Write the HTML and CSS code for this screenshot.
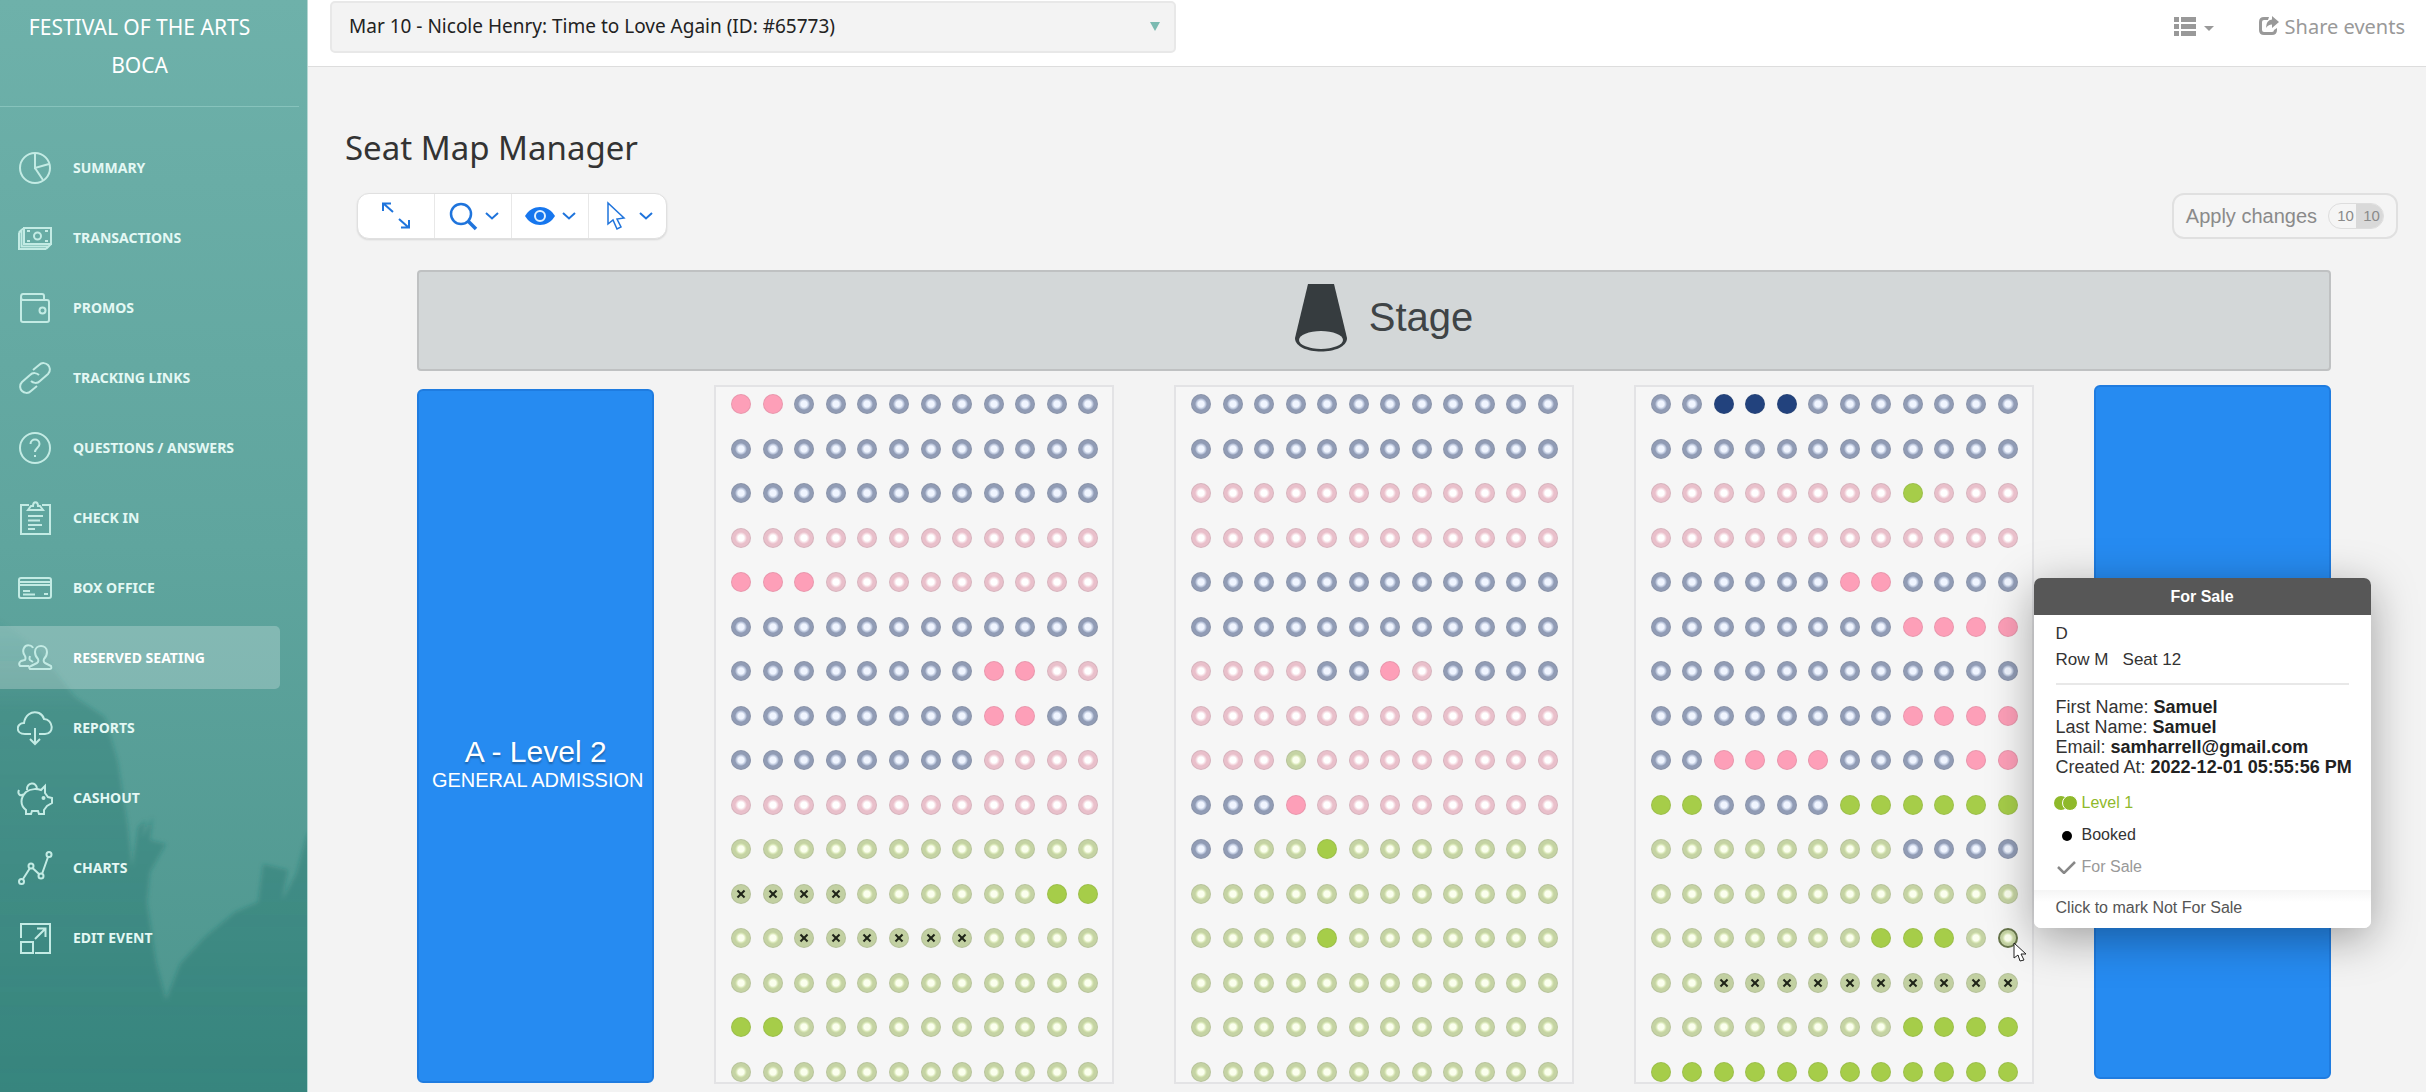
FILE: index.html
```html
<!DOCTYPE html>
<html lang="en">
<head>
<meta charset="utf-8">
<meta name="viewport" content="width=device-width, initial-scale=1">
<title>Seat Map Manager</title>
<link rel="stylesheet" href="styles.css">
</head>
<body>
<div class="app">
  <aside class="sidebar">
    <svg class="backdrop" viewBox="0 0 307 480" preserveAspectRatio="none" aria-hidden="true">
      <defs>
        <linearGradient id="crowd" x1="0" y1="0" x2="0" y2="1">
          <stop offset="0" stop-color="#1f6f68" stop-opacity="0"/>
          <stop offset=".2" stop-color="#1f6f68" stop-opacity=".3"/>
          <stop offset="1" stop-color="#1f6f68" stop-opacity=".42"/>
        </linearGradient>
        <filter id="soft"><feGaussianBlur stdDeviation="2"/></filter>
      </defs>
      <path filter="url(#soft)" fill="url(#crowd)" d="M-10 0 40 40 75 85 105 105 118 150 128 215 132 255 138 215 146 208 142 226 153 205 150 228 166 232 150 260 147 290 156 350 166 388 180 352 205 325 235 300 258 290 263 252 288 258 282 288 296 262 307 222 320 215V490H-10Z"/>
    </svg>
    <h2 class="org">FESTIVAL OF THE ARTS BOCA</h2>
    <nav class="menu">
      <a href="#summary"><svg viewBox="0 0 36 36"><circle cx="18" cy="18" r="15"/><path d="M18 3v15l14-4M18 18l8 12"/></svg>SUMMARY</a>
      <a href="#transactions"><svg viewBox="0 0 36 36"><path d="M7 8h27v16H7zM4.500 10v16.500H32M2 12.500V29h27M4.500 10 7 8M2 12.500l2.500-2.500M29 29l5-5M10 11h3M28 11h3M10 21h3M28 21h3"/><circle cx="20.500" cy="16" r="3.500"/></svg>TRANSACTIONS</a>
      <a href="#promos"><svg viewBox="0 0 36 36"><path d="M4 7v23q0 2 2 2h24q2 0 2-2V12q0-2-2-2H6q-2 0-2-3 0-3 2-3h19q2 0 2 2v4"/><circle cx="25.500" cy="20.500" r="3"/></svg>PROMOS</a>
      <a href="#tracking"><svg viewBox="0 0 36 36"><path d="m16 10 6-5c3-3 7-2 9 0s3 6 0 9l-8 7c-3 3-7 2-9 0M20 26l-6 5c-3 3-7 2-9 0s-3-6 0-9l8-7c3-3 7-2 9 0"/></svg>TRACKING LINKS</a>
      <a href="#questions"><svg viewBox="0 0 36 36"><circle cx="18" cy="18" r="15"/><path d="M13.500 14c0-6 9-6 9 0 0 4-4.500 4-4.500 8M18 25v2"/></svg>QUESTIONS / ANSWERS</a>
      <a href="#checkin"><svg viewBox="0 0 36 36"><path d="M12 5H4v29h29V5h-8M11 10h15l-3-4h-2c0-5-5-5-5 0h-2zM11 16h15M11 20.500h12M11 25h14M11 29h7"/></svg>CHECK IN</a>
      <a href="#boxoffice"><svg viewBox="0 0 36 36"><path d="M4 8h28q2 0 2 2v16q0 2-2 2H4q-2 0-2-2V10q0-2 2-2zM2 12h32M2 15h32M6 21h7M6 24.500h12M27 24h4"/></svg>BOX OFFICE</a>
      <a class="active" href="#seating" aria-current="page"><svg viewBox="0 0 36 36"><path d="M13 29h20q2 0 1-3l-6-3q-2-1-1-4 3-3 3-7c0-8-12-8-12 0q0 4 3 7 1 3-1 4l-6 3q-3 1-1 3zM12 26H3q-2-3 1-5l4-1q1-2 0-4-3-4-1-8c2-4 8-3 9 0M13 16q-1 3 0 4l3 2"/></svg>RESERVED SEATING</a>
      <a href="#reports"><svg viewBox="0 0 36 36"><path d="M14 24H8C-2 24-1 13 7 13 8 6 14 0 22 3q4 2 5 6c9 0 11 15 1 15h-6M18 18v16M13 29l5 5 5-5"/></svg>REPORTS</a>
      <a href="#cashout"><svg viewBox="0 0 36 36"><path d="M2 10c-2 4 2 7 4 4M9 12c5-4 12-3 15-2l4-4v7l3 4 4 1v5l-5 3-3 4v4h-5l-1-3h-6l-1 3H9v-4c-6-5-6-12 0-18z"/><path d="M10 10c-1-8 10-9 10-1"/><circle cx="26.500" cy="18" r="1"/></svg>CASHOUT</a>
      <a href="#charts"><svg viewBox="0 0 36 36"><path d="m6 29 7-11M15.500 18l7 6.500M25 24l6-17"/><circle cx="4.500" cy="31.500" r="2.500"/><circle cx="14" cy="16" r="2.500"/><circle cx="24" cy="26" r="2.500"/><circle cx="32" cy="4.500" r="2.500"/></svg>CHARTS</a>
      <a href="#edit"><svg viewBox="0 0 36 36"><path d="M4 18V4h29v29H18M4 22h12v11H4zM18 19 28 9M20 8.500h8.500V17"/></svg>EDIT EVENT</a>
    </nav>
  </aside>

  <div class="page">
    <header class="topbar">
      <label class="picker">
        <select aria-label="Event">
          <option>Mar 10 - Nicole Henry: Time to Love Again (ID: #65773)</option>
        </select>
      </label>
      <div class="actions">
        <button class="plain" type="button" aria-label="View options">
          <svg width="22" height="19" viewBox="0 0 22 19"><path d="M0 0h5v5H0zM7 0h15v5H7zM0 7h5v5H0zM7 7h15v5H7zM0 14h5v5H0zM7 14h15v5H7z"/></svg>
          <svg class="tick" width="10" height="5" viewBox="0 0 10 5"><path d="M0 0h10L5 5z"/></svg>
        </button>
        <a class="plain" href="#share">
          <svg width="20" height="20" viewBox="0 0 20 20"><path d="M10 1H5Q0 1 0 6v8q0 5 5 5h8q5 0 5-5v-2l-3 2q0 2-2 2H5q-2 0-2-2V6q0-2 2-2h4z"/><path d="M13 0l7 6-7 6V8.500Q9 8.500 7 12q0-8 6-8.500z"/></svg>
          Share events
        </a>
      </div>
    </header>

    <main class="content">
      <h1>Seat Map Manager</h1>
      <div class="tools">
        <div class="toolbar">
          <button type="button" aria-label="Fit to screen"><svg width="30" height="30" viewBox="0 0 30 30"><path d="M12 11 3 3M2 10V2.500h8M18 18l9 8M28 19v7.500h-8"/></svg></button>
          <button type="button" aria-label="Zoom"><svg width="30" height="30" viewBox="0 0 30 30"><circle cx="13" cy="13" r="10" stroke-width="2.500"/><path stroke-width="3.500" d="m20 20 8 8"/></svg><svg width="14" height="8" viewBox="0 0 14 8"><path d="m1 1 6 5.500L13 1"/></svg></button>
          <button type="button" aria-label="Visibility"><svg width="30" height="30" viewBox="0 0 30 30"><path class="solid" d="M0 15C7 3 23 3 30 15 23 27 7 27 0 15z"/><circle cx="15" cy="15" r="5" stroke="#dff0ff" stroke-width="2"/></svg><svg width="14" height="8" viewBox="0 0 14 8"><path d="m1 1 6 5.500L13 1"/></svg></button>
          <button type="button" aria-label="Select"><svg width="30" height="30" viewBox="0 0 30 30"><path stroke-width="1.500" d="M6 2v21l5-4 4 9 4-2-4-8 7-1z"/></svg><svg width="14" height="8" viewBox="0 0 14 8"><path d="m1 1 6 5.500L13 1"/></svg></button>
        </div>
        <button class="apply" type="button">Apply changes <span class="counts"><span>10</span><span>10</span></span></button>
      </div>

      <div class="map">
        <div class="stage">
          <svg width="52" height="68" viewBox="0 0 52 68" aria-hidden="true"><path fill="#363c3f" d="M13 0h26l13 54c0 18-52 18-52 0z"/><ellipse cx="26" cy="56" rx="22" ry="9" fill="#d3d7d8"/></svg>
          Stage
        </div>
        <div class="sections">
          <div class="block block-left"><strong>A - Level 2</strong><span>GENERAL ADMISSION</span></div>
          <div class="seats" data-rows="PPbbbbbbbbbb bbbbbbbbbbbb bbbbbbbbbbbb pppppppppppp PPPppppppppp bbbbbbbbbbbb bbbbbbbbPPpp bbbbbbbbPPbb bbbbbbbbpppp pppppppppppp gggggggggggg xxxxggggggGG ggxxxxxxgggg gggggggggggg GGgggggggggg gggggggggggg"></div>
          <div class="seats" data-rows="bbbbbbbbbbbb bbbbbbbbbbbb pppppppppppp pppppppppppp bbbbbbbbbbbb bbbbbbbbbbbb ppppbbPpbbbb pppppppppppp pppgpppppppp bbbPpppppppp bbggGggggggg gggggggggggg ggggGggggggg gggggggggggg gggggggggggg gggggggggggg"></div>
          <div class="seats" data-rows="bbBBBbbbbbbb bbbbbbbbbbbb ppppppppGppp pppppppppppp bbbbbbPPbbbb bbbbbbbbPPPP bbbbbbbbbbbb bbbbbbbbPPPP bbPPPPbbbbPP GGbbbbGGGGGG ggggggggbbbb gggggggggggg gggggggGGGgh ggxxxxxxxxxx ggggggggGGGG GGGGGGGGGGGG"></div>
          <div class="block block-right"></div>
        </div>
      </div>
    </main>
  </div>
</div>

<template id="seat-details">
  <svg class="pointer" width="14" height="20" viewBox="0 0 14 20" aria-hidden="true"><path d="M1 1v15l4-3 2 6 4-1-3-6h5z"/></svg>
  <div class="popover" role="tooltip">
    <div class="popover-title">For Sale</div>
    <div class="popover-body">
      <p class="place">D</p>
      <p class="place">Row M &nbsp; Seat 12</p>
      <hr>
      <p>First Name: <b>Samuel</b></p>
      <p>Last Name: <b>Samuel</b></p>
      <p>Email: <b>samharrell@gmail.com</b></p>
      <p>Created At: <b>2022-12-01 05:55:56 PM</b></p>
      <ul>
        <li class="level"><svg width="24" height="14" viewBox="0 0 24 14"><circle cx="7" cy="7" r="7"/><circle cx="16" cy="7" r="7.500" stroke="#fff"/></svg>Level 1</li>
        <li><svg width="24" height="14" viewBox="0 0 24 14"><circle cx="13" cy="8" r="5"/></svg>Booked</li>
        <li class="muted"><svg width="24" height="14" viewBox="0 0 24 14"><path fill="none" stroke="#888" stroke-width="2.500" d="m4 7 6 6L21 2"/></svg>For Sale</li>
      </ul>
    </div>
    <div class="popover-foot">Click to mark Not For Sale</div>
  </div>
</template>
<script src="seats.js"></script>
</body>
</html>
```
FILE: styles.css
```css
* {
  box-sizing: border-box;
}

body {
  margin: 0;
  background: #f3f3f3;
  color: #333;
  font-family: "Liberation Sans", Arial, sans-serif;
  overflow-x: hidden;
}

h1, h2, p, ul {
  margin: 0;
  padding: 0;
  font-weight: 400;
}

button, select {
  font: inherit;
  color: inherit;
}

a {
  color: inherit;
  text-decoration: none;
}

.app {
  display: grid;
  grid-template-columns: 308px minmax(0, 1fr);
  min-height: 100vh;
}

/* Sidebar */
.sidebar {
  position: relative;
  border-right: 1px solid #b5d6d2;
  background: linear-gradient(#6eb1aa, #5fa59e 50%, #4c958d);
  color: #e4f8f4;
  font-family: "Noto Sans", "Open Sans", sans-serif;
}

.backdrop {
  position: absolute;
  left: 0;
  bottom: 0;
  width: 100%;
  height: 480px;
}

.org {
  position: relative;
  margin-right: 8px;
  padding: 8px 20px 22px 0;
  border-bottom: 1px solid #87c3bc;
  font-size: 21px;
  line-height: 38px;
  text-align: center;
  color: #fff;
}

.org {
  padding-left: 0;
}

.menu {
  position: relative;
  display: flex;
  flex-direction: column;
  gap: 7px;
  padding: 29px 27px 30px 0;
}

.menu a {
  display: flex;
  align-items: center;
  gap: 20px;
  height: 63px;
  padding-left: 17px;
  border-radius: 0 5px 5px 0;
  font-size: 14px;
  font-weight: 700;
}

.menu .active {
  background: rgba(255, 255, 255, .24);
  color: #fff;
}

.menu svg {
  width: 36px;
  height: 36px;
  fill: none;
  stroke: #c3ebe4;
  stroke-width: 2;
}

/* Top bar */
.page {
  display: flex;
  flex-direction: column;
  min-width: 0;
}

.topbar {
  display: flex;
  justify-content: space-between;
  height: 67px;
  padding: 1px 21px 0 22px;
  border-bottom: 1px solid #ddd;
  background: #fff;
  font-family: "Noto Sans", "Open Sans", sans-serif;
}

.picker {
  position: relative;
  width: 846px;
  height: 52px;
}

.picker select {
  appearance: none;
  width: 100%;
  height: 100%;
  padding: 0 48px 2px 17px;
  border: 2px solid #e8e8e8;
  border-radius: 5px;
  background: #f3f3f3;
  color: #222;
  font-size: 19px;
}

.picker::after {
  content: "";
  position: absolute;
  right: 16px;
  top: 21px;
  border: 5px solid transparent;
  border-top: 9px solid #7bbab1;
  border-bottom: 0;
}

.actions {
  display: flex;
  align-items: center;
  gap: 45px;
  height: 50px;
  color: #999;
  font-size: 20px;
}

.plain {
  display: flex;
  align-items: center;
  gap: 6px;
  padding: 0;
  border: 0;
  background: none;
}

.plain svg {
  fill: #999;
}

.plain .tick {
  margin: 4px 0 0 2px;
}

/* Content */
.content {
  display: flex;
  flex: 1;
  flex-direction: column;
  padding: 56px 28px 8px 37px;
}

h1 {
  font-family: "Noto Sans", "Open Sans", sans-serif;
  font-size: 33px;
  line-height: 50px;
}

.tools {
  display: flex;
  justify-content: space-between;
  margin-top: 20px;
  padding-left: 12px;
}

.toolbar {
  display: flex;
  height: 46px;
  border: 1px solid #e0e0e0;
  border-radius: 12px;
  background: #fff;
  box-shadow: 0 1px 2px rgba(0, 0, 0, .12);
}

.toolbar button {
  display: flex;
  align-items: center;
  justify-content: center;
  gap: 7px;
  width: 77px;
  padding: 0;
  border: 0;
  border-right: 1px solid #e8e8e8;
  background: none;
}

.toolbar button:last-child {
  border-right: 0;
}

.toolbar svg {
  fill: none;
  stroke: #1f74dc;
  stroke-width: 2;
}

.toolbar .solid {
  fill: #1676ee;
  stroke: none;
}

.apply {
  display: flex;
  align-items: center;
  gap: 11px;
  height: 46px;
  padding: 0 12px;
  border: 2px solid #e0e0e0;
  border-radius: 12px;
  background: #f5f5f5;
  color: #8a8a8a;
  font-size: 20px;
}

.counts {
  display: flex;
  overflow: hidden;
  border: 1px solid #ddd;
  border-radius: 13px;
  font-size: 15px;
  line-height: 24px;
}

.counts span {
  width: 27px;
  padding-left: 6px;
}

.counts span + span {
  padding-left: 4px;
  background: #d9d9d9;
}

/* Seat map */
.map {
  display: flex;
  flex: 1;
  flex-direction: column;
  gap: 14px;
  margin: 31px 67px 0 72px;
}

.stage {
  display: flex;
  align-items: center;
  justify-content: center;
  gap: 22px;
  height: 101px;
  padding: 0 0 6px 20px;
  border: 2px solid #bfc1c2;
  border-radius: 4px;
  background: #d3d7d8;
  color: #3f4446;
  font-size: 40px;
}

.sections {
  display: grid;
  flex: 1;
  grid-template-columns: 237fr 399fr 399fr 399fr 237fr;
  gap: 60px;
}

.block {
  display: flex;
  flex-direction: column;
  align-items: center;
  justify-content: center;
  border: 2px solid #1f7ce0;
  border-radius: 6px;
  background: #268bf1;
  color: #fff;
}

.block-left {
  margin: 4px 0 1px;
  padding-top: 56px;
}

.block-right {
  margin-bottom: 5px;
}

.block strong {
  font-size: 30px;
  font-weight: 400;
  line-height: 32px;
  text-shadow: 0 2px 2px rgba(0, 0, 0, .3);
}

.block span {
  padding-left: 4px;
  font-size: 20px;
  line-height: 24px;
  white-space: nowrap;
}

.seats {
  display: grid;
  grid-template-columns: repeat(12, 20px);
  align-content: space-between;
  justify-content: space-between;
  padding: 7px 14px 0 15px;
  border: 2px solid #e3e3e5;
  background: #f6f6f6;
}

.seat-spot {
  position: relative;
  width: 20px;
  height: 20px;
}

.seat {
  --ring: #919cb5;
  --inner: #b4bfd6;
  --core: #f0f5ff;
  display: block;
  position: relative;
  width: 20px;
  height: 20px;
  padding: 0;
  border: 1px solid rgba(90, 90, 90, .12);
  border-radius: 50%;
  background: radial-gradient(circle, var(--core) 0 3px, var(--inner) 5px, var(--ring) 6px);
}

.seat-pink {
  --ring: #e9c0cb;
  --inner: #f2d3db;
  --core: #fff;
}

.seat-green {
  --ring: #c5d3a4;
  --inner: #d2e1ae;
  --core: #fbffee;
}

.seat-pink-full {
  background: #fd9fb8;
}

.seat-green-full {
  background: #a6cd49;
}

.seat-navy-full {
  background: #22427d;
}

.seat-hover {
  border: 2px solid #67754b;
}

.seat-blocked {
  background: #c2d0a2;
}

.seat-blocked::before,
.seat-blocked::after {
  content: "";
  position: absolute;
  left: 4px;
  top: 8px;
  width: 10px;
  height: 2px;
  background: #1f2418;
  transform: rotate(45deg);
}

.seat-blocked::after {
  transform: rotate(-45deg);
}

/* Seat details */
.pointer {
  position: absolute;
  z-index: 3;
  left: 15px;
  top: 14px;
  fill: #fff;
  stroke: #222;
}

.popover {
  position: absolute;
  z-index: 2;
  left: 36px;
  bottom: 20px;
  width: 337px;
  overflow: hidden;
  border-radius: 7px;
  background: #fff;
  box-shadow: 0 10px 45px rgba(0, 0, 0, .35);
  font-size: 18px;
  line-height: 20px;
  white-space: nowrap;
}

.popover-title {
  background: #575757;
  color: #fff;
  font-size: 16px;
  font-weight: 700;
  line-height: 37px;
  text-align: center;
}

.popover-body {
  padding: 6px 22px 7px;
}

.popover .place {
  font-size: 17px;
  line-height: 26px;
}

.popover hr {
  height: 2px;
  margin: 10px 0 12px;
  border: 0;
  background: #e8e8e8;
}

.popover b {
  color: #222;
}

.popover ul {
  margin-top: 10px;
  list-style: none;
  font-size: 16px;
  line-height: 32px;
}

.popover li {
  display: flex;
  align-items: center;
  gap: 4px;
  margin-left: -2px;
}

.popover .level {
  color: #8fb92b;
  fill: #8fb92b;
}

.popover .muted {
  color: #999;
}

.popover-foot {
  padding: 6px 22px 8px;
  background: linear-gradient(#f5f5f5, #fff 12px);
  color: #555;
  font-size: 16px;
  line-height: 24px;
}
```
FILE: seats.js
```js
const kinds = {
  b: "",
  p: "seat-pink",
  g: "seat-green",
  P: "seat-pink-full",
  G: "seat-green-full",
  B: "seat-navy-full",
  x: "seat-blocked",
  h: "seat-green seat-hover"
};

document.querySelectorAll(".seats").forEach((section) => {
  section.dataset.rows.split(" ").forEach((row, r) => {
    [...row].forEach((code, s) => {
      const spot = document.createElement("div");
      spot.className = "seat-spot";
      const seat = document.createElement("button");
      seat.type = "button";
      seat.className = "seat " + kinds[code];
      seat.setAttribute("aria-label", "Row " + String.fromCharCode(65 + r) + " Seat " + (s + 1));
      spot.append(seat);
      if (code === "h") {
        spot.append(document.getElementById("seat-details").content.cloneNode(true));
      }
      section.append(spot);
    });
  });
});
```
